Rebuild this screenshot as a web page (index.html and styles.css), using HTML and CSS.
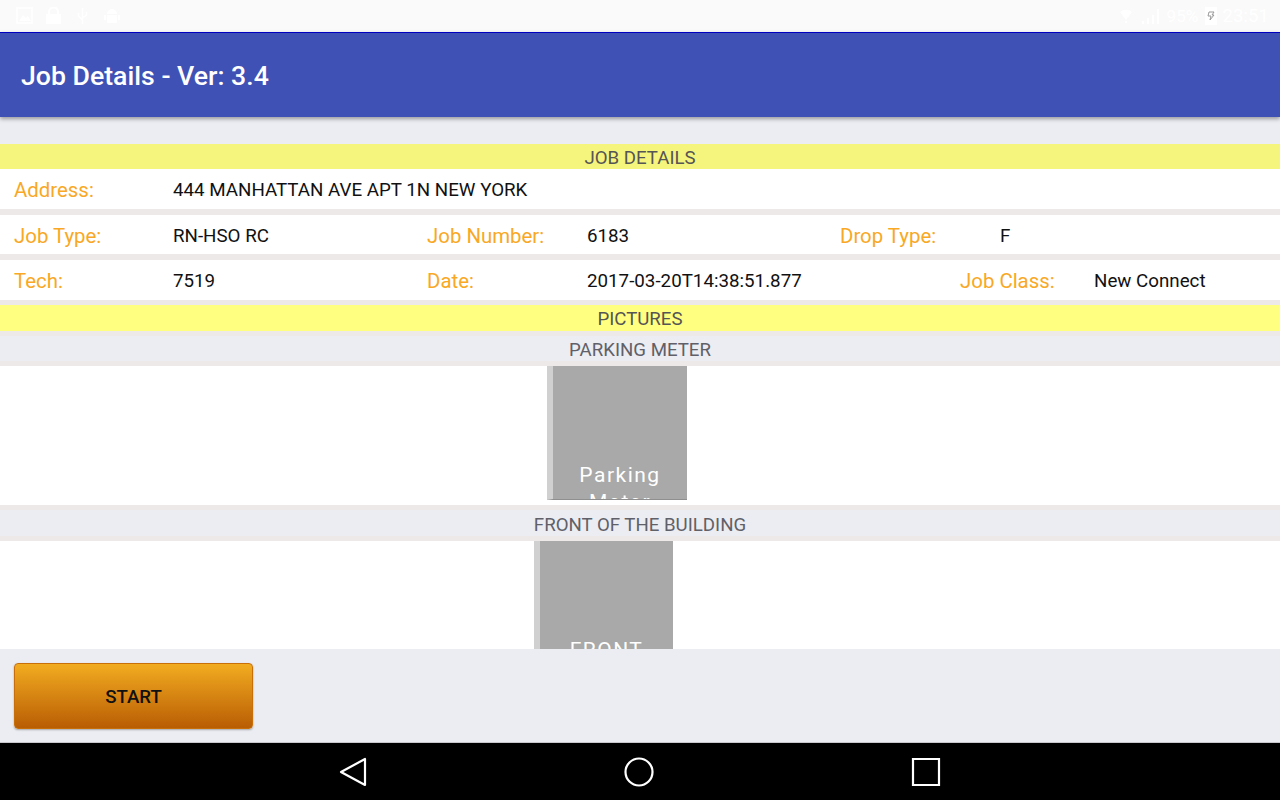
FILE: index.html
```html
<!DOCTYPE html>
<html lang="en">
<head>
    <meta charset="UTF-8">
    <title>Job Details</title>
    <link rel="stylesheet" href="styles.css">
</head>
<body>

<div class="screen">
    <div class="status-bar">
        <div class="status-icons">
            <svg width="17" height="18" viewBox="0 0 17 18"><path fill="none" stroke="#fff" stroke-width="1.5" d="M1 1h15v15H1z"/><path fill="#fff" d="M3 14l4-6 3 3 2-2 3 5z"/></svg>
            <svg width="18" height="18" viewBox="0 0 18 18"><path fill="#fff" d="M0 7h15v10H0z"/><path fill="none" stroke="#fff" stroke-width="2" d="M3 7V5a4.500 4.500 0 0 1 9 0v2"/></svg>
            <svg width="14" height="18" viewBox="0 0 14 18"><path fill="none" stroke="#fff" stroke-width="1.500" d="M5.500 1v16M5.500 13L1.500 9V6M5.500 11l4-3V5"/></svg>
            <svg width="16" height="18" viewBox="0 0 16 18"><path fill="#fff" d="M3 7a5 5 0 0 1 10 0zM3 8h10v7a1 1 0 0 1-1 1H4a1 1 0 0 1-1-1zM0 8h2v5H0zM14 8h2v5h-2z"/></svg>
        </div>
        <div class="status-right">
            <svg class="wifi" width="12" height="14" viewBox="0 0 12 14"><path fill="#fff" d="M0 3a9 9 0 0 1 12 0L6 11zM5 12h2v2H5z"/></svg>
            <svg class="signal" width="18" height="18" viewBox="0 0 18 18"><path fill="#fff" d="M0 14h2v3H0zM5 11h2v6H5zM10 8h2v9h-2zM15 2h2v15h-2z"/></svg>
            <span class="status-text status-level">95%</span>
            <svg width="12" height="18" viewBox="0 0 12 18"><path fill="#fff" d="M0 0h12v18H0z"/><path fill="none" stroke="#999" d="M4 5h5L7 8h2l-4 5 1-4H3z"/></svg>
            <span class="status-text">23:51</span>
        </div>
    </div>

    <div class="app-bar">Job Details - Ver: 3.4</div>

    <div class="content">
        <div class="section-head head-details">JOB DETAILS</div>
        <div class="row row-first">
            <span class="label">Address:</span>
            <span class="value">444 MANHATTAN AVE APT 1N NEW YORK</span>
        </div>
        <div class="row row-mid">
            <span class="label">Job Type:</span>
            <span class="value">RN-HSO RC</span>
            <span class="label">Job Number:</span>
            <span class="value">6183</span>
            <span class="label">Drop Type:</span>
            <span class="value">F</span>
        </div>
        <div class="row row-last">
            <span class="label">Tech:</span>
            <span class="value">7519</span>
            <span class="label">Date:</span>
            <span class="value date">2017-03-20T14:38:51.877</span>
            <span class="label">Job Class:</span>
            <span class="value">New Connect</span>
        </div>
        <div class="section-head head-pictures">PICTURES</div>

        <div class="pic-title pic-title-first">PARKING METER</div>
        <div class="pic-row pic-parking">
            <div class="pic-btn"><span>Parking Meter</span></div>
        </div>

        <div class="pic-title">FRONT OF THE BUILDING</div>
        <div class="pic-row pic-front">
            <div class="pic-btn"><span>FRONT OF THE BUILDING</span></div>
        </div>
    </div>

    <div class="footer">
        <div class="start-btn">START</div>
    </div>

    <div class="nav-bar">
        <svg width="28" height="30" viewBox="0 0 28 30"><path fill="none" stroke="#fff" stroke-width="2.200" stroke-linejoin="round" d="M26 2v26L2 15z"/></svg>
        <svg width="30" height="30" viewBox="0 0 30 30"><circle cx="15" cy="15" r="13.500" fill="none" stroke="#fff" stroke-width="2.200"/></svg>
        <svg width="30" height="30" viewBox="0 0 30 30"><path fill="none" stroke="#fff" stroke-width="2.200" d="M2 2h26v26H2z"/></svg>
    </div>
</div>

</body>
</html>
```

FILE: styles.css
```css
* {
    box-sizing: border-box;
}

html, body {
    margin: 0;
    height: 100%;
}

body {
    font-family: Roboto, "Liberation Sans", sans-serif;
    overflow: hidden;
}

.screen {
    width: 1280px;
    height: 800px;
    display: flex;
    flex-direction: column;
    background: #ecedf2;
}

.status-bar {
    height: 32px;
    flex: none;
    background: #fafafa;
    display: flex;
    justify-content: space-between;
    align-items: center;
    padding: 0 11px 0 16px;
}

.status-icons, .status-right {
    display: flex;
    align-items: center;
}

.status-icons {
    gap: 13px;
}

.status-right {
    gap: 6px;
}

.status-right .wifi {
    margin-right: 4px;
}

.status-text {
    color: #fff;
    font-size: 18.67px;
}

.status-level {
    font-size: 17.3px;
}

.app-bar {
    height: 85px;
    flex: none;
    background: #3f51b5;
    border-top: 1px solid #0000c0;
    box-shadow: 0 2px 4px rgba(0, 0, 0, 0.35);
    color: #fff;
    font-size: 26.67px;
    font-weight: 500;
    line-height: 86px;
    padding-left: 21px;
    position: relative;
}

.content {
    flex: 1;
    min-height: 0;
    overflow: hidden;
    padding-top: 27px;
}

.section-head {
    text-align: center;
    font-size: 18.67px;
    color: #555;
    height: 26px;
    line-height: 28px;
}

.head-details {
    background: #f5f47c;
    height: 25px;
}

.head-pictures {
    background: #ffff80;
}

.row {
    display: grid;
    grid-template-columns: 159px 254px 160px 253px 160px 1fr;
    align-items: center;
    height: 45px;
    padding: 2px 0 0 14px;
    background: #fff;
    border-bottom: 6px solid #eee9e9;
}

.row-first {
    height: 46px;
    grid-template-columns: 159px 1fr;
}

.row-last {
    grid-template-columns: 159px 254px 160px 373px 134px 1fr;
    border-bottom-width: 5px;
}

.label {
    color: #f9a825;
    font-size: 20.4px;
}

.value {
    color: #111;
    font-size: 18.75px;
}

.pic-title {
    height: 31px;
    border-bottom: 5px solid #eee9e9;
    text-align: center;
    font-size: 18.67px;
    line-height: 30px;
    color: #606068;
}

.pic-title-first {
    height: 35px;
    border-top: 5px solid #eee9e9;
    line-height: 28px;
}

.pic-row {
    background: #fff;
}

.pic-parking {
    height: 144px;
    border-bottom: 5px solid #eee9e9;
    padding-left: 547px;
}

.pic-front {
    height: 108px;
    padding-left: 534px;
    overflow: hidden;
}

.pic-btn {
    width: 140px;
    height: 134px;
    background: #a9a9a9;
    border-left: 6px solid #d0d0d0;
    border-bottom: 1px solid #8f8f8f;
    color: #fff;
    font-size: 21px;
    line-height: 27px;
    letter-spacing: 1.5px;
    text-align: center;
    overflow: hidden;
    padding: 96px 18px 0;
}

.pic-front .pic-btn {
    width: 139px;
}

.pic-btn span {
    display: block;
}

.footer {
    height: 94px;
    flex: none;
    padding: 14px 0 0 14px;
    border-bottom: 1px solid #c8c8cc;
}

.start-btn {
    width: 239px;
    height: 66px;
    border: 1px solid #c96f0a;
    border-radius: 4px;
    background: linear-gradient(#f2ac20, #b95d04);
    box-shadow: 0 1px 2px rgba(0, 0, 0, 0.3);
    color: #111;
    font-size: 18.67px;
    font-weight: 500;
    line-height: 66px;
    text-align: center;
}

.nav-bar {
    height: 57px;
    flex: none;
    background: #000;
    display: flex;
    justify-content: center;
    align-items: center;
    gap: 257px;
}
```
